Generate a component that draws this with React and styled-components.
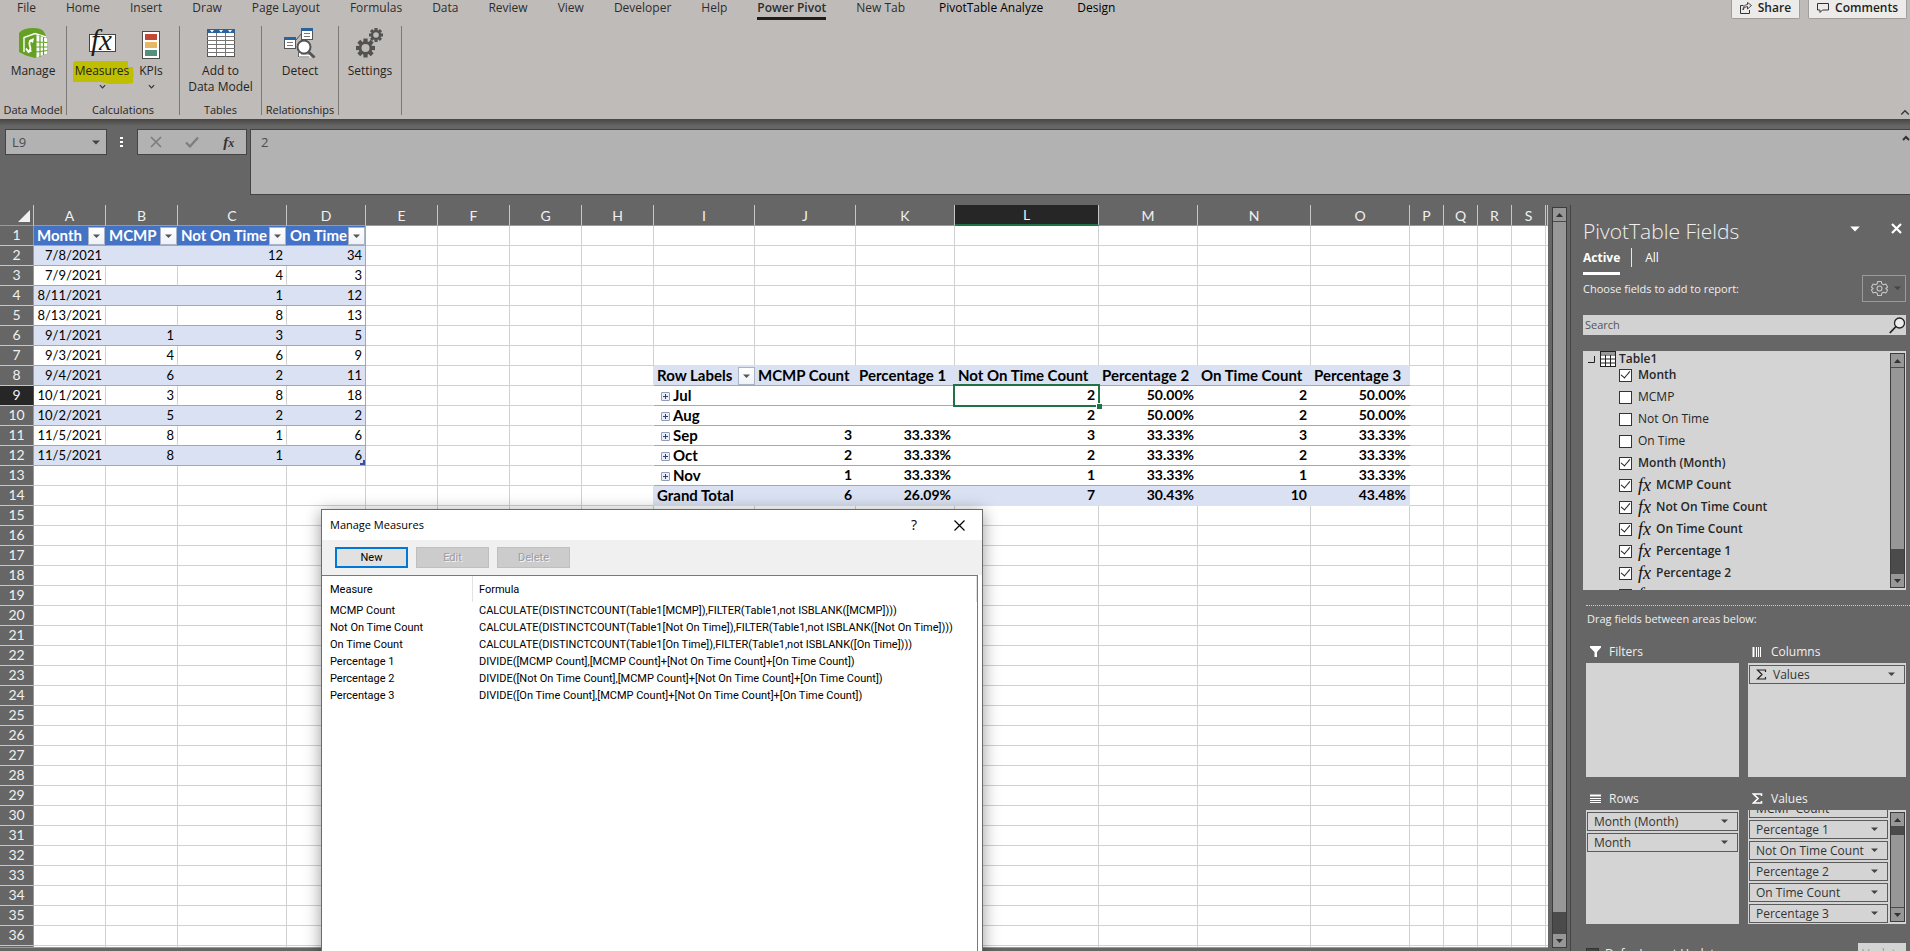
import React from "react";
import styled, { createGlobalStyle, css } from "styled-components";

const UI_FONT = `"Open Sans", "Noto Sans", sans-serif`;
const SHEET_FONT = `Lato, "Open Sans", sans-serif`;
const DIALOG_FONT = `Roboto, "Liberation Sans", sans-serif`;

const GlobalStyle = createGlobalStyle`
  *, *::before, *::after {
    box-sizing: border-box;
  }

  body {
    margin: 0;
    font-family: ${UI_FONT};
    font-size: 12px;
    line-height: 16px;
    background: #666666;
    overflow: hidden;
  }

  button, input {
    font: inherit;
    color: inherit;
    margin: 0;
    padding: 0;
    border: 0;
    background: none;
    border-radius: 0;
  }

  svg {
    display: block;
  }
`;

/* ---------- shell ---------- */

const Shell = styled.div`
  display: flex;
  flex-direction: column;
  height: 100vh;
  background: #666666;
`;

const Workspace = styled.main`
  display: flex;
  flex: 1;
  min-height: 0;
`;

/* ---------- ribbon ---------- */

const Ribbon = styled.header`
  background: #bfbbb8;
  color: #262423;
  height: 119px;
`;

const TabBar = styled.nav`
  display: flex;
  justify-content: space-between;
  height: 20px;
  padding: 0 3px 0 17px;
`;

const Tabs = styled.div`
  display: flex;
  gap: 30px;
`;

const Tab = styled.a`
  height: 20px;
  line-height: 16px;
  margin-left: ${(p) => (p.$contextual ? 4 : 0)}px;
  color: ${(p) => (p.$contextual ? "#000000" : "#2f2d2c")};
  text-decoration: none;
  white-space: nowrap;
  ${(p) =>
    p.$active &&
    css`
      font-weight: 600;
      border-bottom: 3px solid #201c1c;
    `}
`;

const TabActions = styled.div`
  display: flex;
  gap: 8px;
`;

const ActionButton = styled.button`
  display: flex;
  align-items: flex-start;
  gap: 6px;
  height: 19px;
  padding: 0 8px;
  background: #edebe9;
  border: 1px solid #a19f9d;
  border-top: 0;
  border-radius: 0 0 2px 2px;
  color: #201f1e;
  line-height: 15px;
  font-weight: 600;

  svg {
    margin-top: 2px;
  }
`;

const Groups = styled.div`
  display: flex;
  align-items: flex-start;
  height: 97px;
  padding-top: 6px;
  position: relative;
`;

const Group = styled.section`
  display: flex;
  flex-direction: column;
  justify-content: space-between;
  width: ${(p) => p.$width}px;
  height: 89px;
  border-right: 1px solid #7b7876;
`;

const GroupTools = styled.div`
  display: flex;
  justify-content: center;
  padding-right: ${(p) => p.$inset || 0}px;
`;

const GroupName = styled.div`
  text-align: center;
  white-space: nowrap;
  font-size: 11px;
  line-height: 10px;
`;

const Tool = styled.button`
  position: relative;
  display: flex;
  flex-direction: column;
  align-items: center;
  width: ${(p) => (p.$width ? `${p.$width}px` : "auto")};
  line-height: 16px;
  white-space: nowrap;

  > svg:first-child {
    margin: 1px 0 4px;
    overflow: visible;
  }

  > svg:last-child:not(:first-child) {
    margin-top: 4px;
  }
`;

const Marker = styled.svg`
  position: absolute;
  left: 2px;
  top: 35px;
`;

const ToolLabel = styled.span`
  position: relative;
`;

const CollapseButton = styled.button`
  position: absolute;
  right: 0;
  bottom: 0;
`;

/* ---------- formula bar ---------- */

const FormulaBar = styled.div`
  display: flex;
  align-items: flex-start;
  height: 86px;
  padding: 10px 0 0 5px;
  background: linear-gradient(#484644, #666666 7px);
`;

const barBox = css`
  height: 26px;
  background: #b2b2b2;
  border: 1px solid #444444;
  color: #4c4c4c;
`;

const NameBox = styled.div`
  ${barBox}
  display: flex;
  align-items: center;
  width: 102px;
  padding: 0 6px;
`;

const NameInput = styled.input`
  flex: 1;
  min-width: 0;
  font-size: 13px;
  outline: none;
`;

const Dots = styled.svg`
  margin: 7px 14px 0 13px;
`;

const EditTools = styled.div`
  ${barBox}
  display: flex;
  align-items: center;
  justify-content: space-around;
  width: 110px;
  margin-right: 3px;
`;

const FxButton = styled.button`
  font-family: "Liberation Serif", serif;
  font-style: italic;
  font-weight: bold;
  font-size: 15px;
  color: #333333;

  small {
    font-size: 12px;
  }
`;

const FormulaField = styled.div`
  ${barBox}
  display: flex;
  flex: 1;
  height: 66px;
  border-right: 0;
  padding: 4px 0 0 10px;
  align-items: flex-start;
`;

const FormulaInput = styled.input`
  flex: 1;
  font-size: 13px;
  outline: none;
`;

/* ---------- sheet ---------- */

const SheetArea = styled.div`
  flex: 1;
  min-width: 0;
  padding: 0 4px 3px 0;
  background: #666666;
`;

const SheetViewport = styled.div`
  height: 100%;
  overflow: hidden;
  border-bottom: 1px solid #9a9a9a;
`;

const Sheet = styled.table`
  table-layout: fixed;
  width: 100%;
  border-collapse: separate;
  border-spacing: 0;
  font-family: ${SHEET_FONT};
  font-size: 14px;
  line-height: 18px;
  background: #ffffff;
`;

const ColHead = styled.th`
  height: 20px;
  padding: 1px 0 0;
  line-height: 18px;
  font-weight: 400;
  color: #f0f0f0;
  background: ${(p) => (p.$selected ? "#262626" : "#666666")};
  border-right: 1px solid #c6c6c6;
  border-bottom: ${(p) => (p.$selected ? "2px solid #217346" : "1px solid #9a9a9a")};
`;

const Corner = styled(ColHead)`
  svg {
    margin: 0 3px 0 auto;
  }
`;

const RowHead = styled.th`
  height: 20px;
  padding: 0 0 1px;
  font-weight: 400;
  color: #f0f0f0;
  background: ${(p) => (p.$selected ? "#262626" : "#666666")};
  border-right: 1px solid ${(p) => (p.$selected ? "#217346" : "#9a9a9a")};
  border-bottom: 1px solid #c6c6c6;
`;

const Cell = styled.td`
  position: relative;
  height: 20px;
  padding: 0 ${(p) => (p.$open ? 4 : 3)}px 1px 3px;
  font-size: ${(p) => p.$size || 13}px;
  text-align: ${(p) => p.$align || "right"};
  white-space: nowrap;
  color: ${(p) => p.$color || "#000000"};
  font-weight: ${(p) => (p.$bold ? 700 : 400)};
  background: ${(p) => p.$fill || "#ffffff"};
  border-right: ${(p) => (p.$open ? 0 : 1)}px solid ${(p) => p.$right || "#d0d0d0"};
  border-bottom: 1px solid ${(p) => p.$bottom || "#d0d0d0"};
`;

const FilterButton = styled.button`
  position: absolute;
  right: 0;
  top: 1px;
  display: grid;
  place-items: center;
  width: 17px;
  height: 18px;
  background: linear-gradient(#ffffff, #eef2f8);
  border: 1px solid #a9b4c6;
`;

const Expand = styled.button`
  display: inline-grid;
  place-items: center;
  width: 9px;
  height: 9px;
  margin: 0 3px 2px 4px;
  vertical-align: middle;
  background: #e8edf6;
  border: 1px solid #8f9db8;
  border-radius: 1px;
`;

const Selection = styled.span`
  position: absolute;
  z-index: 1;
  inset: -2px -1px -2px -2px;
  border: 2px solid #217346;

  &::after {
    content: "";
    position: absolute;
    right: -4px;
    bottom: -4px;
    width: 6px;
    height: 6px;
    background: #217346;
    border: 1px solid #ffffff;
    border-width: 1px 0 0 1px;
  }
`;

const TableCorner = styled.svg`
  position: absolute;
  right: 0;
  bottom: 0;
`;

/* ---------- scroll bar ---------- */

const ScrollTrack = styled.div`
  display: flex;
  flex-direction: column;
  width: 15px;
  height: ${(p) => p.$height || "auto"};
  background: #4b4b4b;
  border: 1px solid #3c3c3c;
  gap: 1px;
`;

const ScrollButton = styled.button`
  display: grid;
  place-items: center;
  height: 13px;
  background: #979797;
`;

const ScrollThumb = styled.div`
  flex: 1;
  margin: ${(p) => p.$before}px 0 ${(p) => p.$after}px;
  background: #979797;
`;

const SheetScroll = styled.div`
  display: flex;
  padding: 2px 3px 3px 0;
  border-right: 1px solid #444444;
`;

/* ---------- fields pane ---------- */

const Pane = styled.aside`
  width: 339px;
  padding: 14px 4px 0 12px;
  color: #f0f0f0;
  overflow: hidden;
`;

const PaneHead = styled.div`
  display: flex;
  align-items: flex-start;
  justify-content: space-between;
  padding-right: 4px;
`;

const PaneTitle = styled.h2`
  margin: 0;
  font-size: 21px;
  line-height: 25px;
  font-weight: 300;
`;

const PaneButtons = styled.div`
  display: flex;
  align-items: center;
  gap: 31px;
  padding-top: 4px;
`;

const PaneTabs = styled.div`
  display: flex;
  align-items: flex-start;
  margin-top: 4px;
  height: 27px;
`;

const PaneTab = styled.button`
  height: 27px;
  padding-bottom: 5px;
  color: #ffffff;
  font-weight: ${(p) => (p.$active ? 700 : 400)};
  border-bottom: 3px solid ${(p) => (p.$active ? "#ffffff" : "transparent")};
`;

const TabRule = styled.span`
  width: 1px;
  height: 19px;
  margin: 0 13px 0 11px;
  background: #e6e6e6;
`;

const ChooseRow = styled.div`
  display: flex;
  justify-content: space-between;
  height: 27px;
  font-size: 11px;
  line-height: 27px;
`;

const GearButton = styled.button`
  display: flex;
  align-items: center;
  justify-content: space-between;
  width: 44px;
  padding: 0 4px 0 8px;
  border: 1px solid #9a9a9a;
`;

const SearchBox = styled.label`
  display: flex;
  align-items: center;
  height: 20px;
  margin-top: 13px;
  padding-left: 2px;
  background: #d2d2d2;
  color: #555555;
  font-size: 11px;
`;

const SearchInput = styled.input`
  flex: 1;
  outline: none;

  &::placeholder {
    color: #555555;
    opacity: 1;
  }
`;

const FieldPanel = styled.div`
  display: flex;
  align-items: center;
  height: 239px;
  margin-top: 16px;
  padding-right: 1px;
  background: #d4d4d4;
  color: #262626;
  overflow: hidden;
`;

const FieldTree = styled.div`
  flex: 1;
  height: 239px;
  overflow: hidden;
`;

const TableNode = styled.div`
  display: flex;
  align-items: center;
  height: 16px;
  padding-left: 5px;
  font-weight: 600;

  svg + svg {
    margin: 0 3px 0 5px;
  }
`;

const FieldRow = styled.label`
  display: flex;
  align-items: center;
  height: 22px;
  padding-left: 36px;
  font-weight: ${(p) => (p.$checked ? 600 : 400)};
  margin-top: ${(p) => (p.$first ? "-3px" : 0)};
`;

const CheckBox = styled.input`
  appearance: none;
  position: relative;
  width: 13px;
  height: 13px;
  margin-right: 6px;
  background: #ffffff;
  border: 1px solid #333333;

  &:checked::before {
    content: "";
    position: absolute;
    left: 1px;
    top: 1px;
    width: 9px;
    height: 5px;
    border: solid #222222;
    border-width: 0 0 1px 1px;
    transform: rotate(-50deg);
  }
`;

const Fx = styled.i`
  width: 18px;
  font-family: "Liberation Serif", serif;
  font-size: 18px;
  font-weight: 400;
  line-height: 16px;
  color: #111111;
`;

const DragHint = styled.p`
  margin: 15px -4px 0 3px;
  padding: 5px 0 0 1px;
  border-top: 1px dotted #d0d0d0;
  font-size: 11px;
`;

const Areas = styled.div`
  display: grid;
  grid-template-columns: 153px 1fr;
  column-gap: 9px;
  margin: 13px 0 0 3px;
`;

const AreaName = styled.div`
  display: flex;
  align-items: center;
  gap: 8px;
  height: 23px;
  padding-left: 4px;

  svg {
    width: 11px;
  }
`;

const AreaBox = styled.div`
  display: flex;
  height: 114px;
  margin-bottom: 10px;
  background: #d4d4d4;
  overflow: hidden;
`;

const AreaItems = styled.div`
  display: flex;
  flex: 1;
  flex-direction: column;
  justify-content: ${(p) => (p.$scrolled ? "flex-end" : "flex-start")};
  gap: 2px;
  padding: ${(p) => (p.$scrolled ? "0 2px 1px 1px" : "2px 1px 0")};
  overflow: hidden;
`;

const AreaItem = styled.button`
  display: flex;
  flex: none;
  align-items: center;
  gap: 6px;
  height: 19px;
  padding: 0 9px 0 6px;
  border: 1px solid #5a5a5a;
  color: #333333;
  line-height: 17px;
  text-align: left;

  span {
    flex: 1;
    white-space: nowrap;
  }
`;

const AreaScroll = styled.div`
  padding: 2px 1px 0 0;
`;

const PaneFooter = styled.div`
  display: flex;
  justify-content: space-between;
  padding-left: 3px;
  margin-top: 9px;
`;

const DeferLabel = styled.label`
  display: flex;
  align-items: center;
  height: 22px;
`;

const DeferCheck = styled(CheckBox)`
  background: #444444;
`;

const UpdateButton = styled.button`
  width: 48px;
  height: 22px;
  background: #d4d4d4;
  color: #9a9a9a;
`;

/* ---------- dialog ---------- */

const Dialog = styled.section`
  position: absolute;
  left: 321px;
  top: 509px;
  z-index: 5;
  width: 662px;
  height: 480px;
  background: #ffffff;
  border: 1px solid #6b6b6b;
  box-shadow: 0 3px 16px rgba(0, 0, 0, 0.4);
  font-family: ${DIALOG_FONT};
  font-size: 11px;
  color: #000000;
  display: flex;
  flex-direction: column;
`;

const DialogTitle = styled.div`
  display: flex;
  align-items: center;
  height: 30px;
  padding: 0 17px 0 8px;
  font-family: ${UI_FONT};

  h3 {
    flex: 1;
    margin: 0;
    font-size: 11px;
    font-weight: 400;
  }
`;

const HelpButton = styled.button`
  margin-right: 37px;
  font-size: 14px;
`;

const DialogTools = styled.div`
  display: flex;
  gap: 8px;
  height: 35px;
  padding: 7px 13px;
  background: #f0f0f0;
`;

const DialogButton = styled.button`
  width: 73px;
  height: 21px;
  background: #e1e1e1;
  border: 2px solid #0078d7;

  &:disabled {
    background: #cccccc;
    border: 1px solid #bfbfbf;
    color: #9d9d9d;
    text-shadow: 1px 1px 0 #f5f5f5;
  }
`;

const DialogBody = styled.div`
  flex: 1;
  margin-right: 4px;
  border: 1px solid #7a7a7a;
  border-left: 0;
`;

const MeasureTable = styled.table`
  table-layout: fixed;
  width: 100%;
  border-collapse: separate;
  border-spacing: 0;
  line-height: 17px;

  th {
    height: 26px;
    padding: 1px 0 0 6px;
    font-weight: 400;
    text-align: left;
    border-right: 1px solid #e2e2e2;
  }

  td {
    height: 17px;
    padding: 0 0 0 6px;
    white-space: nowrap;
  }

  th:first-child,
  td:first-child {
    padding-left: 8px;
  }
`;

/* ---------- icons ---------- */

const Caret = ({ w = 8, color = "#444444" }) => (
  <svg width={w} height={w / 2 + 1} viewBox="0 0 8 5">
    <path d="M0 0.5h8L4 4.5z" fill={color} />
  </svg>
);

const Chevron = ({ up, w = 7, color = "#333", stroke = 1.4 }) => (
  <svg width={w} height={w} viewBox="0 0 8 8" fill="none">
    <path d={up ? "M1 6l3-3 3 3" : "M1 2.5l3 3 3-3"} stroke={color} strokeWidth={stroke} />
  </svg>
);

const ScrollArrow = ({ up }) => (
  <svg width="7" height="4" viewBox="0 0 7 4">
    <path d={up ? "M0 4h7L3.5 0z" : "M0 0h7L3.5 4z"} fill="#333333" />
  </svg>
);

const ManageIcon = () => (
  <svg width="32" height="32" viewBox="0 0 32 32">
    <path d="M2 6Q6 1 16 1q9 0 11 4l2 4v18l-11 4-9-2.500L2 25z" fill="#63a023" />
    <path d="M7 25V10.500L18 6.500l11 3.500" stroke="#fff" strokeWidth="1.400" fill="none" />
    <path d="M19.500 8l10.500 3.500v15L19.500 30.500z" fill="#fff" />
    <path d="M23 8v22M26.500 10v18M19 15l11.500 0.500M19 20h11.500M19 25l11.500-1.500" stroke="#63a023" strokeWidth="1.200" />
    <path d="M14.500 13q-2.500 1-2 4.500l1 4-1.500 3M9 21.500l2.500 3.500 3-1.500" stroke="#fff" strokeWidth="1.800" fill="none" />
    <path d="M12 13.500l5-2.500-1 5z" fill="#fff" />
  </svg>
);

const MeasuresIcon = () => (
  <svg width="30" height="32" viewBox="0 0 30 32">
    <rect x="2.500" y="7.500" width="26" height="17" fill="#ffffff" stroke="#444444" />
    <text x="4" y="23" fontFamily="Liberation Serif, serif" fontStyle="italic" fontSize="29" fill="#1b1b1b">
      fx
    </text>
  </svg>
);

const KpiIcon = () => (
  <svg width="20" height="32" viewBox="0 0 20 32">
    <rect x="1.500" y="4.500" width="17" height="27" fill="#ffffff" stroke="#4d4d4d" />
    <rect x="4" y="7" width="12" height="6" fill="#c44736" />
    <rect x="4" y="15" width="12" height="6" fill="#e6b863" />
    <rect x="4" y="23" width="12" height="6" fill="#548f7b" />
  </svg>
);

const TablePlusIcon = () => (
  <svg width="28" height="32" viewBox="0 0 28 32">
    <rect x="0.500" y="2.500" width="27" height="27" fill="#ffffff" stroke="#555555" />
    <rect x="0" y="2" width="28" height="4" fill="#2a629f" />
    <path d="M3 3h4L5 5.500zM12 3h4l-2 2.500zM21 3h4l-2 2.500z" fill="#ffffff" />
    <path d="M0 9.500h28M0 13.500h28M0 17.500h28M0 21.500h28M0 25.500h28M9.500 6v24M18.500 6v24" stroke="#777777" />
  </svg>
);

const DetectIcon = () => (
  <svg width="32" height="32" viewBox="0 0 32 32">
    <path d="M12 13l6-7" stroke="#555" strokeWidth="1" />
    <rect x="0.500" y="10.500" width="11" height="11" fill="#fff" stroke="#555" />
    <rect x="0" y="10" width="12" height="3" fill="#2a629f" />
    <path d="M3 15.500h6M3 18.500h6" stroke="#777" />
    <rect x="17.500" y="1.500" width="11" height="11" fill="#fff" stroke="#555" />
    <rect x="17" y="1" width="12" height="3" fill="#2a629f" />
    <path d="M20 6.500h6M20 9.500h6" stroke="#777" />
    <path d="M15.500 26v3.500h11" stroke="#fff" strokeWidth="3" fill="none" />
    <path d="M14.500 25v5h11" stroke="#666" fill="none" />
    <circle cx="20" cy="20" r="6.500" fill="#fff" stroke="#555" strokeWidth="2" />
    <path d="M24.500 25l6 5.500" stroke="#555" strokeWidth="3" />
  </svg>
);

const teeth = [0, 45, 90, 135, 180, 225, 270, 315];

const Cog = ({ x, y, r, hole }) => (
  <g transform={`translate(${x} ${y})`} fill="#525252">
    {teeth.map((a) => (
      <rect key={a} x={-r / 4.5} y={-r} width={r / 2.25} height={r} transform={`rotate(${a})`} />
    ))}
    <circle r={r * 0.72} />
    <circle r={hole} fill="#bfbbb8" />
  </g>
);

const SettingsIcon = () => (
  <svg width="28" height="32" viewBox="0 0 28 32">
    <Cog x={9.5} y={21} r={9.5} hole={4} />
    <Cog x={20} y={8} r={7} hole={2.8} />
  </svg>
);

const ShareIcon = () => (
  <svg width="12" height="12" viewBox="0 0 12 12" fill="none" stroke="#333">
    <path d="M3.500 3.500h-3v8h9V8" />
    <path d="M3 8Q3.500 4.500 7.500 4.500v2.500l4-3.500-4-3v2Q3 3 3 8z" strokeWidth="0.900" />
  </svg>
);

const CommentIcon = () => (
  <svg width="12" height="12" viewBox="0 0 12 12" fill="none" stroke="#333">
    <path d="M0.500 1.500h11v6.500H5.500L3 10.500V8H0.500z" />
  </svg>
);

const GearIcon = () => (
  <svg width="17" height="17" viewBox="0 0 24 24" fill="none" stroke="#c8c8c8" strokeWidth="1.500" strokeLinejoin="round">
    <path d="M9.500 2h5l0.800 3.300 2.400 1.400 3.300-1 2.400 4.300-2.400 2 2.400 2 -2.400 4.300-3.300-1-2.400 1.400L14.500 22h-5l-0.800-3.300-2.400-1.400-3.300 1L0.600 14 3 12 0.600 10 3 5.700l3.300 1 2.400-1.400z" />
    <circle cx="12" cy="12" r="3.500" />
  </svg>
);

const SearchIcon = () => (
  <svg width="17" height="17" viewBox="0 0 17 17" fill="none" stroke="#222">
    <circle cx="10.500" cy="6" r="5" fill="#ededed" strokeWidth="1.300" />
    <path d="M7 9.500L0.800 16" strokeWidth="1.800" />
  </svg>
);

const NodeArrow = () => (
  <svg width="7" height="7" viewBox="0 0 7 7">
    <path d="M6.500 0v6.500H0" fill="none" stroke="#222222" />
  </svg>
);

const TableIcon = () => (
  <svg width="16" height="16" viewBox="0 0 16 16">
    <rect x="0.500" y="0.500" width="15" height="15" fill="#ffffff" stroke="#222222" />
    <rect x="1" y="1" width="14" height="2" fill="#999999" />
    <path d="M0 4h16M0 8h16M0 12h16M5.500 4v12M10.500 4v12" stroke="#222222" />
  </svg>
);

const FunnelIcon = () => (
  <svg width="11" height="11" viewBox="0 0 11 11">
    <path d="M0 0h11v1.500L7 6v5H4.500V6L0 1.500z" fill="#ffffff" />
  </svg>
);

const ColumnsIcon = () => (
  <svg width="11" height="10" viewBox="0 0 11 10">
    <path d="M1.500 0v10" stroke="#fff" strokeWidth="2" />
    <path d="M4.500 0v10M6.500 0v10M8.500 0v10" stroke="#fff" />
  </svg>
);

const RowsIcon = () => (
  <svg width="11" height="10" viewBox="0 0 11 10">
    <path d="M0 1.500h11" stroke="#fff" strokeWidth="2" />
    <path d="M0 4.500h11M0 6.500h11M0 8.500h11" stroke="#fff" />
  </svg>
);

const SigmaIcon = ({ color = "#ffffff", stroke = 1.6 }) => (
  <svg width="11" height="11" viewBox="0 0 11 11" fill="none" stroke={color} strokeWidth={stroke}>
    <path d="M9.500 3V1H1.500l4.500 4.500L1.500 10h8V8" />
  </svg>
);

/* ---------- data ---------- */

const TABS = [
  "File", "Home", "Insert", "Draw", "Page Layout", "Formulas", "Data", "Review",
  "View", "Developer", "Help", "Power Pivot", "New Tab", "PivotTable Analyze", "Design",
];

const COLUMNS = [
  ["A", 72], ["B", 72], ["C", 109], ["D", 79], ["E", 72], ["F", 72], ["G", 72],
  ["H", 72], ["I", 101], ["J", 101], ["K", 99], ["L", 144], ["M", 99], ["N", 113],
  ["O", 99], ["P", 34], ["Q", 34], ["R", 34], ["S", 34],
];

const SOURCE = [
  ["Month", "MCMP", "Not On Time", "On Time"],
  ["7/8/2021", "", "12", "34"],
  ["7/9/2021", "", "4", "3"],
  ["8/11/2021", "", "1", "12"],
  ["8/13/2021", "", "8", "13"],
  ["9/1/2021", "1", "3", "5"],
  ["9/3/2021", "4", "6", "9"],
  ["9/4/2021", "6", "2", "11"],
  ["10/1/2021", "3", "8", "18"],
  ["10/2/2021", "5", "2", "2"],
  ["11/5/2021", "8", "1", "6"],
  ["11/5/2021", "8", "1", "6"],
];

const PIVOT = [
  ["Row Labels", "MCMP Count", "Percentage 1", "Not On Time Count", "Percentage 2", "On Time Count", "Percentage 3"],
  ["Jul", "", "", "2", "50.00%", "2", "50.00%"],
  ["Aug", "", "", "2", "50.00%", "2", "50.00%"],
  ["Sep", "3", "33.33%", "3", "33.33%", "3", "33.33%"],
  ["Oct", "2", "33.33%", "2", "33.33%", "2", "33.33%"],
  ["Nov", "1", "33.33%", "1", "33.33%", "1", "33.33%"],
  ["Grand Total", "6", "26.09%", "7", "30.43%", "10", "43.48%"],
];

const PIVOT_ROW = 8;
const PIVOT_COL = 8;
const ROW_COUNT = 37;

const FIELDS = [
  { name: "Month", checked: true },
  { name: "MCMP" },
  { name: "Not On Time" },
  { name: "On Time" },
  { name: "Month (Month)", checked: true },
  { name: "MCMP Count", checked: true, measure: true },
  { name: "Not On Time Count", checked: true, measure: true },
  { name: "On Time Count", checked: true, measure: true },
  { name: "Percentage 1", checked: true, measure: true },
  { name: "Percentage 2", checked: true, measure: true },
  { name: "Percentage 3", checked: true, measure: true },
];

const VALUES = ["MCMP Count", "Percentage 1", "Not On Time Count", "Percentage 2", "On Time Count", "Percentage 3"];

const MEASURES = [
  ["MCMP Count", "CALCULATE(DISTINCTCOUNT(Table1[MCMP]),FILTER(Table1,not ISBLANK([MCMP])))"],
  ["Not On Time Count", "CALCULATE(DISTINCTCOUNT(Table1[Not On Time]),FILTER(Table1,not ISBLANK([Not On Time])))"],
  ["On Time Count", "CALCULATE(DISTINCTCOUNT(Table1[On Time]),FILTER(Table1,not ISBLANK([On Time])))"],
  ["Percentage 1", "DIVIDE([MCMP Count],[MCMP Count]+[Not On Time Count]+[On Time Count])"],
  ["Percentage 2", "DIVIDE([Not On Time Count],[MCMP Count]+[Not On Time Count]+[On Time Count])"],
  ["Percentage 3", "DIVIDE([On Time Count],[MCMP Count]+[Not On Time Count]+[On Time Count])"],
];

/* ---------- parts ---------- */

function RibbonBar() {
  return (
    <Ribbon>
      <TabBar>
        <Tabs>
          {TABS.map((name, index) => (
            <Tab key={name} href="#" $active={name === "Power Pivot"} $contextual={index > 12}>
              {name}
            </Tab>
          ))}
        </Tabs>
        <TabActions>
          <ActionButton>
            <ShareIcon />
            Share
          </ActionButton>
          <ActionButton>
            <CommentIcon />
            Comments
          </ActionButton>
        </TabActions>
      </TabBar>
      <Groups>
        <Group $width={67}>
          <GroupTools>
            <Tool>
              <ManageIcon />
              Manage
            </Tool>
          </GroupTools>
          <GroupName>Data Model</GroupName>
        </Group>
        <Group $width={113}>
          <GroupTools $inset={6}>
            <Tool $width={62}>
              <MeasuresIcon />
              <Marker width="61" height="24" viewBox="0 0 61 24">
                <path d="M1 0h54v6h5q1 8 0 16l-6 1H36l-8-2H0V3z" fill="#bfbf00" />
              </Marker>
              <ToolLabel>Measures</ToolLabel>
              <Chevron />
            </Tool>
            <Tool $width={36}>
              <KpiIcon />
              <ToolLabel>KPIs</ToolLabel>
              <Chevron />
            </Tool>
          </GroupTools>
          <GroupName>Calculations</GroupName>
        </Group>
        <Group $width={82}>
          <GroupTools>
            <Tool>
              <TablePlusIcon />
              <span>Add to</span>
              <span>Data Model</span>
            </Tool>
          </GroupTools>
          <GroupName>Tables</GroupName>
        </Group>
        <Group $width={77}>
          <GroupTools>
            <Tool>
              <DetectIcon />
              Detect
            </Tool>
          </GroupTools>
          <GroupName>Relationships</GroupName>
        </Group>
        <Group $width={63}>
          <GroupTools>
            <Tool>
              <SettingsIcon />
              Settings
            </Tool>
          </GroupTools>
        </Group>
        <CollapseButton aria-label="Collapse the ribbon">
          <Chevron up w={10} stroke={1} />
        </CollapseButton>
      </Groups>
    </Ribbon>
  );
}

function FormulaRow() {
  return (
    <FormulaBar>
      <NameBox>
        <NameInput aria-label="Name box" defaultValue="L9" />
        <Caret />
      </NameBox>
      <Dots width="3" height="12" viewBox="0 0 3 12">
        <path d="M0 1h3v2H0zM0 5h3v2H0zM0 9h3v2H0z" fill="#ffffff" />
      </Dots>
      <EditTools>
        <button aria-label="Cancel">
          <svg width="12" height="12" viewBox="0 0 12 12">
            <path d="M1 1l10 10M11 1L1 11" stroke="#7d7d7d" strokeWidth="1.700" />
          </svg>
        </button>
        <button aria-label="Enter">
          <svg width="14" height="12" viewBox="0 0 14 12">
            <path d="M1 6.500l4 4 8-9" stroke="#7d7d7d" strokeWidth="2.200" fill="none" />
          </svg>
        </button>
        <FxButton aria-label="Insert function">
          f<small>x</small>
        </FxButton>
      </EditTools>
      <FormulaField>
        <FormulaInput aria-label="Formula" defaultValue="2" />
        <button aria-label="Collapse formula bar">
          <Chevron up w={8} stroke={2} />
        </button>
      </FormulaField>
    </FormulaBar>
  );
}

function FilterArrow({ label }) {
  return (
    <FilterButton aria-label={`Filter ${label}`}>
      <Caret w={7} color="#555555" />
    </FilterButton>
  );
}

function SourceCell({ row, col }) {
  const value = SOURCE[row - 1][col];
  const last = col === 3;
  if (row === 1) {
    return (
      <Cell
        $align="left"
        $bold
        $size={15}
        $color="#ffffff"
        $fill="#4472c4"
        $right={last ? "#8ea9db" : "#4472c4"}
        $bottom="#8ea9db"
      >
        {value}
        <FilterArrow label={value} />
      </Cell>
    );
  }
  const banded = row % 2 === 0;
  return (
    <Cell
      $open={banded && !last}
      $fill={banded ? "#d9e1f2" : "#ffffff"}
      $right={last ? "#8ea9db" : "#d0d0d0"}
      $bottom="#8ea9db"
    >
      {value}
      {row === 12 && last && (
        <TableCorner width="5" height="5" viewBox="0 0 5 5">
          <path d="M3 0h2v5H0V3h3z" fill="#3b4fa0" />
        </TableCorner>
      )}
    </Cell>
  );
}

function PivotCell({ row, col }) {
  const r = row - PIVOT_ROW;
  const c = col - PIVOT_COL;
  const value = PIVOT[r][c];
  const total = r === PIVOT.length - 1;
  const label = r === 0 || c === 0;
  const fill = r === 0 || total ? "#d9e1f2" : "#ffffff";
  return (
    <Cell
      $open
      $align={label ? "left" : "right"}
      $size={label ? 15 : 14}
      $bold
      $fill={fill}
      $bottom={total ? fill : "#95abcd"}
    >
      {c === 0 && r > 0 && !total && (
        <Expand aria-label={`Expand ${value}`}>
          <svg width="5" height="5" viewBox="0 0 5 5">
            <path d="M2.500 0v5M0 2.500h5" stroke="#33436b" />
          </svg>
        </Expand>
      )}
      {value}
      {r === 0 && c === 0 && <FilterArrow label={value} />}
      {row === 9 && col === 11 && <Selection />}
    </Cell>
  );
}

function GridCell({ row, col }) {
  if (row <= SOURCE.length && col < 4) {
    return <SourceCell row={row} col={col} />;
  }
  const pivotEnd = PIVOT_ROW + PIVOT.length;
  const inRows = row >= PIVOT_ROW && row < pivotEnd;
  const inCols = col >= PIVOT_COL && col < PIVOT_COL + PIVOT[0].length;
  if (inRows && inCols) {
    return <PivotCell row={row} col={col} />;
  }
  // the pivot fill runs over the grid lines just above and left of it
  const edgeFill = row === PIVOT_ROW || row === pivotEnd - 1 ? "#d9e1f2" : "#ffffff";
  return (
    <Cell
      $right={inRows && col === PIVOT_COL - 1 ? edgeFill : undefined}
      $bottom={inCols && row === PIVOT_ROW - 1 ? "#d9e1f2" : undefined}
    />
  );
}

function Grid() {
  const rows = Array.from({ length: ROW_COUNT }, (_, i) => i + 1);
  return (
    <SheetArea>
      <SheetViewport>
        <Sheet>
          <colgroup>
            <col width="34" />
            {COLUMNS.map(([name, width]) => (
              <col key={name} width={width} />
            ))}
            <col />
          </colgroup>
          <thead>
            <tr>
              <Corner>
                <svg width="12" height="12" viewBox="0 0 12 12">
                  <path d="M12 0v12H0z" fill="#f2f2f2" />
                </svg>
              </Corner>
              {COLUMNS.map(([name]) => (
                <ColHead key={name} $selected={name === "L"}>
                  {name}
                </ColHead>
              ))}
              <ColHead />
            </tr>
          </thead>
          <tbody>
            {rows.map((row) => (
              <tr key={row}>
                <RowHead $selected={row === 9}>{row < ROW_COUNT ? row : ""}</RowHead>
                {COLUMNS.map(([name], col) => (
                  <GridCell key={name} row={row} col={col} />
                ))}
                <Cell $open />
              </tr>
            ))}
          </tbody>
        </Sheet>
      </SheetViewport>
    </SheetArea>
  );
}

function ScrollBar({ before = 0, after = 0, height }) {
  return (
    <ScrollTrack $height={height}>
      <ScrollButton aria-label="Scroll up">
        <ScrollArrow up />
      </ScrollButton>
      <ScrollThumb $before={before} $after={after} />
      <ScrollButton aria-label="Scroll down">
        <ScrollArrow />
      </ScrollButton>
    </ScrollTrack>
  );
}

function Area({ icon, name, items, scrolled }) {
  return (
    <div>
      <AreaName>
        {icon}
        {name}
      </AreaName>
      <AreaBox>
        <AreaItems $scrolled={scrolled}>
          {items.map((item) => (
            <AreaItem key={item}>
              {item === "Values" && <SigmaIcon color="#222222" stroke={1.2} />}
              <span>{item}</span>
              <Caret w={7} />
            </AreaItem>
          ))}
        </AreaItems>
        {scrolled && (
          <AreaScroll>
            <ScrollBar before={8} height="110px" />
          </AreaScroll>
        )}
      </AreaBox>
    </div>
  );
}

function FieldsPane() {
  return (
    <Pane>
      <PaneHead>
        <PaneTitle>PivotTable Fields</PaneTitle>
        <PaneButtons>
          <button aria-label="Task pane options">
            <Caret w={10} color="#ffffff" />
          </button>
          <button aria-label="Close pane">
            <svg width="11" height="11" viewBox="0 0 11 11">
              <path d="M1 1l9 9M10 1l-9 9" stroke="#ffffff" strokeWidth="2.200" />
            </svg>
          </button>
        </PaneButtons>
      </PaneHead>
      <PaneTabs>
        <PaneTab $active>Active</PaneTab>
        <TabRule />
        <PaneTab>All</PaneTab>
      </PaneTabs>
      <ChooseRow>
        Choose fields to add to report:
        <GearButton aria-label="Tools">
          <GearIcon />
          <Caret w={7} />
        </GearButton>
      </ChooseRow>
      <SearchBox>
        <SearchInput placeholder="Search" aria-label="Search" />
        <SearchIcon />
      </SearchBox>
      <FieldPanel>
        <FieldTree>
          <TableNode>
            <NodeArrow />
            <TableIcon />
            Table1
          </TableNode>
          {FIELDS.map((field, index) => (
            <FieldRow key={field.name} $checked={field.checked} $first={index === 0}>
              <CheckBox type="checkbox" defaultChecked={field.checked} />
              {field.measure && <Fx>fx</Fx>}
              {field.name}
            </FieldRow>
          ))}
        </FieldTree>
        <ScrollBar after={24} height="235px" />
      </FieldPanel>
      <DragHint>Drag fields between areas below:</DragHint>
      <Areas>
        <Area icon={<FunnelIcon />} name="Filters" items={[]} />
        <Area icon={<ColumnsIcon />} name="Columns" items={["Values"]} />
        <Area icon={<RowsIcon />} name="Rows" items={["Month (Month)", "Month"]} />
        <Area icon={<SigmaIcon />} name="Values" items={VALUES} scrolled />
      </Areas>
      <PaneFooter>
        <DeferLabel>
          <DeferCheck type="checkbox" />
          Defer Layout Update
        </DeferLabel>
        <UpdateButton disabled>Update</UpdateButton>
      </PaneFooter>
    </Pane>
  );
}

function MeasuresDialog() {
  return (
    <Dialog role="dialog" aria-label="Manage Measures">
      <DialogTitle>
        <h3>Manage Measures</h3>
        <HelpButton>?</HelpButton>
        <button aria-label="Close">
          <svg width="11" height="11" viewBox="0 0 11 11">
            <path d="M0.500 0.500l10 10M10.500 0.500l-10 10" stroke="#000000" strokeWidth="1.200" />
          </svg>
        </button>
      </DialogTitle>
      <DialogTools>
        <DialogButton>New</DialogButton>
        <DialogButton disabled>Edit</DialogButton>
        <DialogButton disabled>Delete</DialogButton>
      </DialogTools>
      <DialogBody>
        <MeasureTable>
          <colgroup>
            <col width="151" />
            <col />
          </colgroup>
          <thead>
            <tr>
              <th>Measure</th>
              <th>Formula</th>
            </tr>
          </thead>
          <tbody>
            {MEASURES.map(([name, formula]) => (
              <tr key={name}>
                <td>{name}</td>
                <td>{formula}</td>
              </tr>
            ))}
          </tbody>
        </MeasureTable>
      </DialogBody>
    </Dialog>
  );
}

export default function App() {
  return (
    <Shell>
      <GlobalStyle />
      <RibbonBar />
      <FormulaRow />
      <Workspace>
        <Grid />
        <SheetScroll>
          <ScrollBar after={21} />
        </SheetScroll>
        <FieldsPane />
      </Workspace>
      <MeasuresDialog />
    </Shell>
  );
}
